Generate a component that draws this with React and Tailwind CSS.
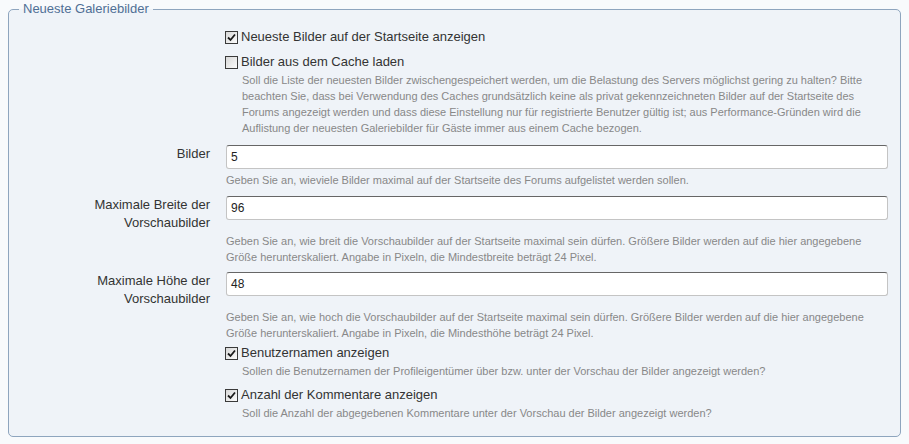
import React from "react";

const FONT = { fontFamily: '"Liberation Sans", Arial, sans-serif' };

function Check({ checked }) {
  return (
    <span className="inline-flex h-[13px] w-[13px] shrink-0 items-center justify-center border border-[#3a3a3a] bg-gradient-to-br from-[#d8d8d8] to-[#fbfbfb]">
      {checked && (
        <svg width="9" height="9" viewBox="0 0 9 9">
          <path d="M1 4.5 L3.5 7 L8 1.5" fill="none" stroke="#1a1a1a" strokeWidth="1.8" />
        </svg>
      )}
    </span>
  );
}

function Desc({ lines, className = "" }) {
  return (
    <div className={"text-[11px] leading-[16px] text-[#888] " + className}>
      {lines.map((l, i) => (
        <div key={i} className="whitespace-nowrap">{l}</div>
      ))}
    </div>
  );
}

function CheckRow({ checked, label, lines, className = "" }) {
  return (
    <div className={"pl-[216px] " + className}>
      <div className="flex h-[20px] items-center gap-[3px]">
        <Check checked={checked} />
        <span className="text-[13px] leading-[20px] text-[#333]">{label}</span>
      </div>
      {lines && <Desc lines={lines} className="pl-[17px]" />}
    </div>
  );
}

function InputRow({ label, value, lines, descClass = "", className = "" }) {
  return (
    <div className={"flex " + className}>
      <div className="w-[201px] shrink-0 pt-[0px] text-right text-[13px] leading-[18px] text-[#333]">
        {label.map((l, i) => (
          <div key={i}>{l}</div>
        ))}
      </div>
      <div className="ml-[16px] flex-1">
        <div className="flex h-[24px] w-[662px] items-center rounded-[3px] border border-[#c4c4c4] border-t-[#666] bg-white px-[4px] text-[12px] text-[#222]">
          {value}
        </div>
        <Desc lines={lines} className={descClass} />
      </div>
    </div>
  );
}

export default function App() {
  return (
    <div style={FONT} className="min-h-[444px] w-[909px] bg-[#f8fafc] px-[8px] pt-0">
      <fieldset className="relative h-[437px] rounded-[5px] border border-[#8ea5be] bg-[#eff3f8] p-0">
        <legend className="ml-[10px] px-[4px] text-[13px] leading-[18px] text-[#4f6f95]">Neueste Galeriebilder</legend>
        <div className="pt-[9px]">
          <CheckRow checked label="Neueste Bilder auf der Startseite anzeigen" />
          <CheckRow
            className="mt-[5px]"
            label="Bilder aus dem Cache laden"
            lines={[
              "Soll die Liste der neuesten Bilder zwischengespeichert werden, um die Belastung des Servers möglichst gering zu halten? Bitte",
              "beachten Sie, dass bei Verwendung des Caches grundsätzlich keine als privat gekennzeichneten Bilder auf der Startseite des",
              "Forums angezeigt werden und dass diese Einstellung nur für registrierte Benutzer gültig ist; aus Performance-Gründen wird die",
              "Auflistung der neuesten Galeriebilder für Gäste immer aus einem Cache bezogen.",
            ]}
          />
          <InputRow
            className="mt-[9px]"
            label={["Bilder"]}
            value="5"
            descClass="mt-[3px]"
            lines={["Geben Sie an, wieviele Bilder maximal auf der Startseite des Forums aufgelistet werden sollen."]}
          />
          <InputRow
            className="mt-[8px]"
            label={["Maximale Breite der", "Vorschaubilder"]}
            value="96"
            descClass="mt-[13px]"
            lines={[
              "Geben Sie an, wie breit die Vorschaubilder auf der Startseite maximal sein dürfen. Größere Bilder werden auf die hier angegebene",
              "Größe herunterskaliert. Angabe in Pixeln, die Mindestbreite beträgt 24 Pixel.",
            ]}
          />
          <InputRow
            className="mt-[7px]"
            label={["Maximale Höhe der", "Vorschaubilder"]}
            value="48"
            descClass="mt-[13px]"
            lines={[
              "Geben Sie an, wie hoch die Vorschaubilder auf der Startseite maximal sein dürfen. Größere Bilder werden auf die hier angegebene",
              "Größe herunterskaliert. Angabe in Pixeln, die Mindesthöhe beträgt 24 Pixel.",
            ]}
          />
          <CheckRow
            className="mt-[2px]"
            checked
            label="Benutzernamen anzeigen"
            lines={["Sollen die Benutzernamen der Profileigentümer über bzw. unter der Vorschau der Bilder angezeigt werden?"]}
          />
          <CheckRow
            className="mt-[6px]"
            checked
            label="Anzahl der Kommentare anzeigen"
            lines={["Soll die Anzahl der abgegebenen Kommentare unter der Vorschau der Bilder angezeigt werden?"]}
          />
        </div>
      </fieldset>
    </div>
  );
}
